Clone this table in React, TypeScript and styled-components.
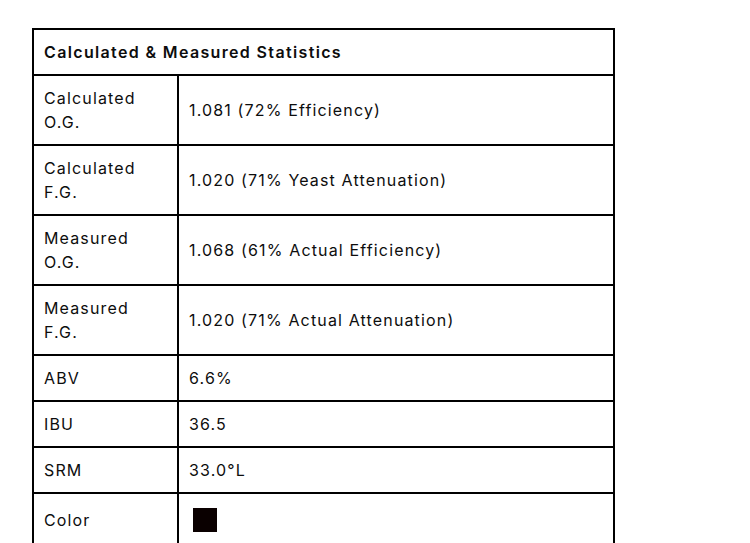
import React from "react";
import styled, { createGlobalStyle } from "styled-components";

const Global = createGlobalStyle`
  html, body { margin: 0; padding: 0; background: #fff; }
  body { font-family: Inter, "Noto Sans", sans-serif; color: #0d0d0d; }
`;

const Page = styled.div`
  padding: 28px 0 0 32px;
`;

const Table = styled.table`
  width: 583px;
  border-collapse: collapse;
  border: 2px solid #000;
  font-size: 16px;
  line-height: 24px;
  letter-spacing: 1.15px;
`;

const HeadCell = styled.th`
  text-align: left;
  font-weight: 600;
  letter-spacing: 1.35px;
  padding: 10px;
  border: 2px solid #000;
`;

const Cell = styled.td<{ $label?: boolean }>`
  padding: 10px;
  border: 2px solid #000;
  vertical-align: middle;
  width: ${(p) => (p.$label ? "123px" : "auto")};
`;

const Swatch = styled.div<{ $color: string }>`
  width: 24px;
  height: 24px;
  margin: 4px;
  background: ${(p) => p.$color};
`;

const rows: [string, React.ReactNode][] = [
  ["Calculated O.G.", "1.081 (72% Efficiency)"],
  ["Calculated F.G.", "1.020 (71% Yeast Attenuation)"],
  ["Measured O.G.", "1.068 (61% Actual Efficiency)"],
  ["Measured F.G.", "1.020 (71% Actual Attenuation)"],
  ["ABV", "6.6%"],
  ["IBU", "36.5"],
  ["SRM", "33.0°L"],
  ["Color", <Swatch $color="#0a0000" />],
];

export default function App() {
  return (
    <>
      <Global />
      <Page>
        <Table>
          <thead>
            <tr>
              <HeadCell colSpan={2}>Calculated &amp; Measured Statistics</HeadCell>
            </tr>
          </thead>
          <tbody>
            {rows.map(([k, v]) => (
              <tr key={k}>
                <Cell $label>{k}</Cell>
                <Cell>{v}</Cell>
              </tr>
            ))}
          </tbody>
        </Table>
      </Page>
    </>
  );
}
